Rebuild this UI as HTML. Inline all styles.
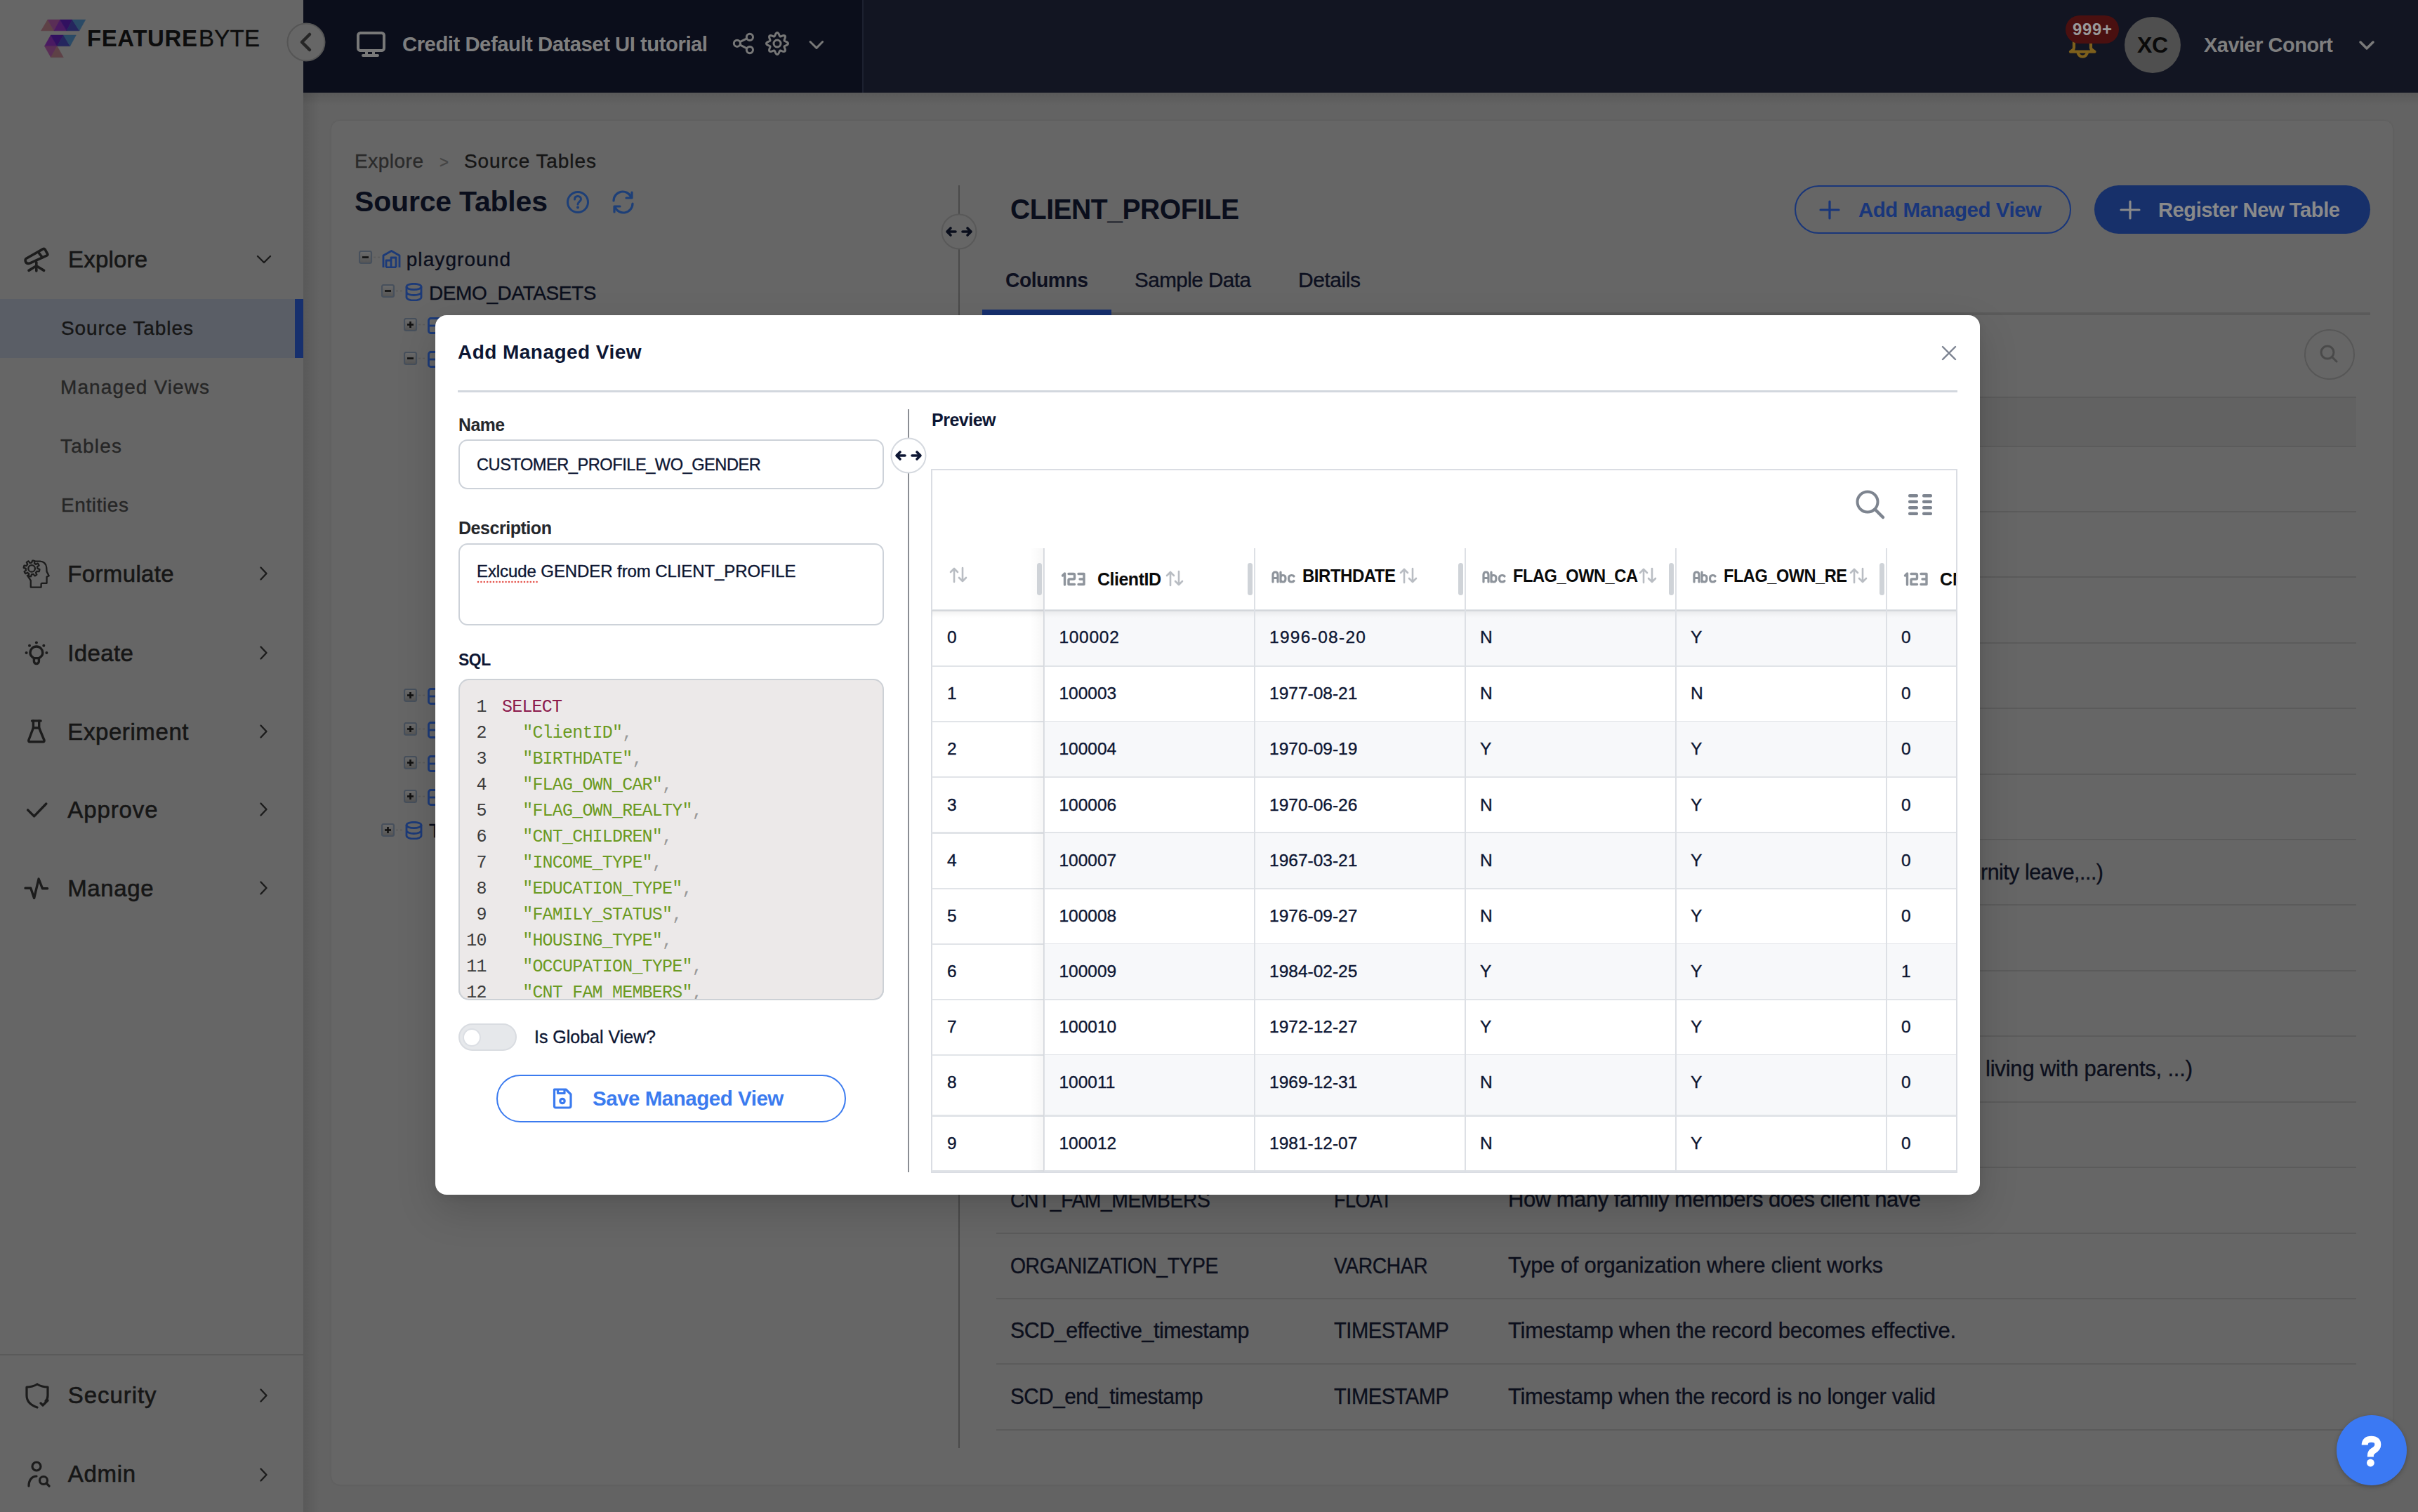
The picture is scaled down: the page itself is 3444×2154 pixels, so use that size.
<!DOCTYPE html>
<html><head><meta charset="utf-8"><title>FeatureByte</title>
<style>
html,body{margin:0;padding:0;}
body{width:3444px;height:2154px;position:relative;overflow:hidden;background:#636363;font-family:'Liberation Sans', sans-serif;}
.tx{position:absolute;white-space:nowrap;line-height:1;}
.sb{-webkit-text-stroke:0.5px currentColor;}
@media (max-width:1800px){html{zoom:0.5;}}
</style></head><body>
<div style="position:absolute;left:472.0px;top:172.0px;width:2936.0px;height:1943.0px;background:#666666;border-radius:12px;box-shadow:0 0 3px rgba(0,0,0,0.10);"></div>
<div style="position:absolute;left:432.0px;top:132.0px;width:3012.0px;height:18.0px;background:linear-gradient(rgba(0,0,0,0.10),rgba(0,0,0,0));"></div>
<div style="position:absolute;left:432.0px;top:132.0px;width:23.0px;height:2022.0px;background:linear-gradient(90deg,rgba(0,0,0,0.10),rgba(0,0,0,0));"></div>
<div style="position:absolute;left:0.0px;top:0.0px;width:432.0px;height:2154.0px;background:#666666;"></div>
<div style="position:absolute;left:432.0px;top:0.0px;width:797.0px;height:132.0px;background:#0b0e1b;"></div>
<div style="position:absolute;left:1229.0px;top:0.0px;width:2215.0px;height:132.0px;background:#121522;"></div>
<div style="position:absolute;left:1228.0px;top:0.0px;width:2.0px;height:132.0px;background:#1c2030;"></div>
<svg style="position:absolute;left:0.0px;top:0.0px;" width="130.0" height="90.0" viewBox="0 0 130 90"><polygon points="58.6,43.8 67.9,28.1 77,43.8" fill="#5e4146" stroke="#5e4146" stroke-width="0.5"/><polygon points="67.9,28.1 85.5,28.1 77,43.8" fill="#5a2e56" stroke="#5a2e56" stroke-width="0.5"/><polygon points="77,43.8 85.5,28.1 95,43.8" fill="#4a1a62" stroke="#4a1a62" stroke-width="0.5"/><polygon points="85.5,28.1 103,28.1 95,43.8" fill="#311060" stroke="#311060" stroke-width="0.5"/><polygon points="95,43.8 103,28.1 113,43.8" fill="#25265e" stroke="#25265e" stroke-width="0.5"/><polygon points="103,28.1 121.8,28.1 113,43.8" fill="#2a4a66" stroke="#2a4a66" stroke-width="0.5"/><polygon points="63.5,65.7 72.3,50 81.3,65.7" fill="#4a1a62" stroke="#4a1a62" stroke-width="0.5"/><polygon points="72.3,50 90.5,50 81.3,65.7" fill="#311060" stroke="#311060" stroke-width="0.5"/><polygon points="81.3,65.7 90.5,50 99.8,65.7" fill="#25265e" stroke="#25265e" stroke-width="0.5"/><polygon points="90.5,50 108.3,50 99.8,65.7" fill="#2a4a66" stroke="#2a4a66" stroke-width="0.5"/><polygon points="63.5,65.7 81.3,65.7 72.5,81.7" fill="#5a2e56" stroke="#5a2e56" stroke-width="0.5"/><polygon points="72.5,81.7 81.3,65.7 90.3,81.7" fill="#5e4146" stroke="#5e4146" stroke-width="0.5"/></svg>
<div id="t1" class="tx" style="left:124.0px;top:38.2px;font-size:33.0px;font-weight:700;color:#0d0d0d;font-family:'Liberation Sans', sans-serif;letter-spacing:0.602px;">FEATURE</div>
<div id="t2" class="tx" style="left:283.0px;top:38.2px;font-size:33.0px;font-weight:400;color:#0d0d0d;font-family:'Liberation Sans', sans-serif;letter-spacing:0.266px;-webkit-text-stroke:0.35px currentColor;">BYTE</div>
<svg style="position:absolute;left:408.0px;top:32.0px;" width="56.0" height="56.0" viewBox="0 0 56 56"><circle cx="28" cy="28" r="26.5" fill="#666" stroke="#555" stroke-width="2"/><path d="M33 17 L22 28 L33 39" fill="none" stroke="#262626" stroke-width="4.5" stroke-linecap="round" stroke-linejoin="round"/></svg>
<svg style="position:absolute;left:506.0px;top:43.0px;" width="44.0" height="40.0" viewBox="0 0 44 40"><rect x="4" y="4" width="37" height="25" rx="3.5" fill="none" stroke="#787878" stroke-width="4"/><path d="M16 29 V36 M26 29 V36 M11 36 H32" stroke="#787878" stroke-width="4" stroke-linecap="round"/></svg>
<div id="t3" class="tx" style="left:573.0px;top:48.0px;font-size:30.0px;font-weight:700;color:#7f7f7f;font-family:'Liberation Sans', sans-serif;letter-spacing:-0.50px;transform:scaleX(0.9770);transform-origin:0 0;">Credit Default Dataset UI tutorial</div>
<svg style="position:absolute;left:1040.0px;top:45.0px;" width="36.0" height="34.0" viewBox="0 0 36 34"><g fill="none" stroke="#777" stroke-width="3"><circle cx="9.9" cy="16.8" r="4.6"/><circle cx="27.9" cy="7.9" r="4.6"/><circle cx="27.9" cy="26.1" r="4.6"/><path d="M14 14.7 L23.8 9.9 M14 18.9 L23.8 24"/></g></svg>
<svg style="position:absolute;left:1090.0px;top:45.0px;" width="34.0" height="34.0" viewBox="0 0 34 34"><polygon points="17.00,1.50 17.80,1.72 18.54,2.34 19.18,3.26 19.69,4.32 20.12,5.36 20.50,6.22 20.92,6.78 21.45,7.00 22.15,6.90 23.02,6.56 24.06,6.13 25.18,5.75 26.28,5.55 27.24,5.63 27.96,6.04 28.37,6.76 28.45,7.72 28.25,8.82 27.87,9.94 27.44,10.97 27.10,11.85 27.00,12.55 27.22,13.08 27.78,13.50 28.64,13.88 29.68,14.31 30.74,14.82 31.66,15.46 32.28,16.20 32.50,17.00 32.28,17.80 31.66,18.54 30.74,19.18 29.68,19.69 28.64,20.12 27.78,20.50 27.22,20.92 27.00,21.45 27.10,22.15 27.44,23.02 27.87,24.06 28.25,25.18 28.45,26.28 28.37,27.24 27.96,27.96 27.24,28.37 26.28,28.45 25.18,28.25 24.06,27.87 23.02,27.44 22.15,27.10 21.45,27.00 20.92,27.22 20.50,27.78 20.12,28.64 19.69,29.68 19.18,30.74 18.54,31.66 17.80,32.28 17.00,32.50 16.20,32.28 15.46,31.66 14.82,30.74 14.31,29.68 13.88,28.64 13.50,27.78 13.08,27.22 12.55,27.00 11.85,27.10 10.98,27.44 9.94,27.87 8.82,28.25 7.72,28.45 6.76,28.37 6.04,27.96 5.63,27.24 5.55,26.28 5.75,25.18 6.13,24.06 6.56,23.03 6.90,22.15 7.00,21.45 6.78,20.92 6.22,20.50 5.36,20.12 4.32,19.69 3.26,19.18 2.34,18.54 1.72,17.80 1.50,17.00 1.72,16.20 2.34,15.46 3.26,14.82 4.32,14.31 5.36,13.88 6.22,13.50 6.78,13.08 7.00,12.55 6.90,11.85 6.56,10.97 6.13,9.94 5.75,8.82 5.55,7.72 5.63,6.76 6.04,6.04 6.76,5.63 7.72,5.55 8.82,5.75 9.94,6.13 10.98,6.56 11.85,6.90 12.55,7.00 13.08,6.78 13.50,6.22 13.88,5.36 14.31,4.32 14.82,3.26 15.46,2.34 16.20,1.72" fill="none" stroke="#777" stroke-width="3" stroke-linejoin="round"/><circle cx="17" cy="17" r="5" fill="none" stroke="#777" stroke-width="3"/></svg>
<svg style="position:absolute;left:1151.0px;top:56.0px;" width="24.0" height="16.0" viewBox="0 0 24 16"><path d="M3 3.5 L12 12.4 L20.6 3.5" fill="none" stroke="#777" stroke-width="3" stroke-linecap="round" stroke-linejoin="round"/></svg>
<svg style="position:absolute;left:2940.0px;top:40.0px;" width="52.0" height="50.0" viewBox="0 0 52 50"><path d="M14 8 V28 Q14 30 12 31.5 L9 33.7 H43.5 L40.5 31.5 Q38 30 38 28 V8" fill="none" stroke="#7d5f1c" stroke-width="4.2" stroke-linejoin="round" stroke-linecap="round"/><path d="M19.5 34 A6.5 6.5 0 0 0 33 34" fill="none" stroke="#7d5f1c" stroke-width="4.2"/></svg>
<div style="position:absolute;left:2942.0px;top:22.0px;width:76.0px;height:40.0px;background:#4a1010;border-radius:20px;"></div>
<div id="t4" class="tx" style="left:2952.0px;top:30.1px;font-size:24.0px;font-weight:700;color:#9a9a9a;font-family:'Liberation Sans', sans-serif;letter-spacing:0.646px;">999+</div>
<div style="position:absolute;left:3026.0px;top:24.0px;width:80.0px;height:80.0px;background:#4f4f4f;border-radius:50%;"></div>
<div id="t5" class="tx" style="left:3044.0px;top:47.8px;font-size:32.0px;font-weight:700;color:#0a0a0a;font-family:'Liberation Sans', sans-serif;letter-spacing:-0.453px;">XC</div>
<div id="t6" class="tx" style="left:3139.0px;top:48.5px;font-size:30.0px;font-weight:700;color:#7f7f7f;font-family:'Liberation Sans', sans-serif;letter-spacing:-0.50px;transform:scaleX(0.9648);transform-origin:0 0;">Xavier Conort</div>
<svg style="position:absolute;left:3359.0px;top:56.0px;" width="24.0" height="16.0" viewBox="0 0 24 16"><path d="M3 4 L12 13 L21 4" fill="none" stroke="#7a7a7a" stroke-width="3.5" stroke-linecap="round" stroke-linejoin="round"/></svg>
<svg style="position:absolute;left:33.0px;top:352.0px;" width="38.0" height="38.0" viewBox="0 0 38 38"><g fill="none" stroke="#1c1c1c" stroke-width="3.6" stroke-linecap="round" stroke-linejoin="round"><path d="M4 16.5 L28.4 2.6 Q30 1.8 31 3.2 L34.6 9.6 Q35.4 11 34 11.8 L10.5 22.6 Q5.5 24.8 3.6 21.2 Q2.4 18.2 4 16.5 Z"/><path d="M22.6 8.6 L27.3 14.6"/><path d="M18.8 21.5 V34 M8 33.4 L18.8 26.8 L29.6 33.4"/></g></svg>
<div id="t7" class="tx" style="left:97.0px;top:352.9px;font-size:33.0px;font-weight:400;color:#161616;font-family:'Liberation Sans', sans-serif;letter-spacing:0.185px;-webkit-text-stroke:0.6px #161616;">Explore</div>
<svg style="position:absolute;left:364.0px;top:362.0px;" width="24.0" height="16.0" viewBox="0 0 24 16"><path d="M3 3 L12 12 L21 3" fill="none" stroke="#1c1c1c" stroke-width="2.4" stroke-linecap="round" stroke-linejoin="round"/></svg>
<div style="position:absolute;left:0.0px;top:426.0px;width:432.0px;height:84.0px;background:#5a5e66;"></div>
<div style="position:absolute;left:420.0px;top:426.0px;width:12.0px;height:84.0px;background:#17306e;"></div>
<div id="t8" class="tx" style="left:87.0px;top:454.2px;font-size:28.0px;font-weight:400;color:#161616;font-family:'Liberation Sans', sans-serif;letter-spacing:0.922px;-webkit-text-stroke:0.4px currentColor;">Source Tables</div>
<div id="t9" class="tx" style="left:86.0px;top:538.2px;font-size:28.0px;font-weight:400;color:#262626;font-family:'Liberation Sans', sans-serif;letter-spacing:1.105px;-webkit-text-stroke:0.4px currentColor;">Managed Views</div>
<div id="t10" class="tx" style="left:86.0px;top:622.2px;font-size:28.0px;font-weight:400;color:#262626;font-family:'Liberation Sans', sans-serif;letter-spacing:1.212px;-webkit-text-stroke:0.4px currentColor;">Tables</div>
<div id="t11" class="tx" style="left:87.0px;top:706.2px;font-size:28.0px;font-weight:400;color:#262626;font-family:'Liberation Sans', sans-serif;letter-spacing:0.596px;-webkit-text-stroke:0.4px currentColor;">Entities</div>
<svg style="position:absolute;left:32.0px;top:796.0px;" width="40.0" height="46.0" viewBox="0 0 40 46"><g fill="none" stroke="#1c1c1c" stroke-width="2.3" stroke-linejoin="round"><polygon points="24.29,16.08 24.02,17.16 23.65,18.22 20.44,17.78 20.02,18.48 19.54,19.14 18.99,19.74 20.37,22.68 19.47,23.35 18.52,23.93 17.51,24.41 15.54,21.83 14.75,22.03 13.95,22.16 13.14,22.20 12.03,25.25 10.92,25.09 9.84,24.82 8.78,24.45 9.22,21.24 8.52,20.82 7.86,20.34 7.26,19.79 4.32,21.17 3.65,20.27 3.07,19.32 2.59,18.31 5.17,16.34 4.97,15.55 4.84,14.75 4.80,13.94 1.75,12.83 1.91,11.72 2.18,10.64 2.55,9.58 5.76,10.02 6.18,9.32 6.66,8.66 7.21,8.06 5.83,5.12 6.73,4.45 7.68,3.87 8.69,3.39 10.66,5.97 11.45,5.77 12.25,5.64 13.06,5.60 14.17,2.55 15.28,2.71 16.36,2.98 17.42,3.35 16.98,6.56 17.68,6.98 18.34,7.46 18.94,8.01 21.88,6.63 22.55,7.53 23.13,8.48 23.61,9.49 21.03,11.46 21.23,12.25 21.36,13.05 21.40,13.86 24.45,14.97"/><circle cx="13.1" cy="13.9" r="4.8"/><path d="M16.6 3.6 H25 C30 3.6 34 7.5 34.2 12.5 L34.6 18.4 L37.7 24.2 L34.6 25.8 V34.8 H27.7 L26.6 35.9 V40.6 H11.8 V31 L6.5 23"/></g></svg>
<div id="t12" class="tx" style="left:96.3px;top:801.0px;font-size:33.0px;font-weight:400;color:#161616;font-family:'Liberation Sans', sans-serif;letter-spacing:0.355px;-webkit-text-stroke:0.6px #161616;">Formulate</div>
<svg style="position:absolute;left:367.0px;top:805.0px;" width="16.0" height="24.0" viewBox="0 0 16 24"><path d="M4.5 3.5 L12.5 12 L4.5 20.5" fill="none" stroke="#1c1c1c" stroke-width="2.4" stroke-linecap="round" stroke-linejoin="round"/></svg>
<svg style="position:absolute;left:30.0px;top:905.0px;" width="45.0" height="47.0" viewBox="0 0 45 47"><g fill="none" stroke="#1c1c1c" stroke-width="3.4" stroke-linecap="round" stroke-linejoin="round"><path d="M18.4 32.6 C14 30 13 26.5 13 24.9 A8.9 8.9 0 0 1 30.8 24.9 C30.8 26.5 29.8 30 25.4 32.6 Z"/><path d="M18.4 33 V37 A3.5 3.5 0 0 0 25.4 37 V33"/></g><g fill="#1c1c1c"><circle cx="21.9" cy="10.6" r="2"/><circle cx="12" cy="14.8" r="2"/><circle cx="32.3" cy="14.8" r="2"/><circle cx="7.6" cy="24.9" r="2"/><circle cx="36.4" cy="24.9" r="2"/></g></svg>
<div id="t13" class="tx" style="left:96.3px;top:913.7px;font-size:33.0px;font-weight:400;color:#161616;font-family:'Liberation Sans', sans-serif;letter-spacing:0.350px;-webkit-text-stroke:0.6px #161616;">Ideate</div>
<svg style="position:absolute;left:367.0px;top:917.5px;" width="16.0" height="24.0" viewBox="0 0 16 24"><path d="M4.5 3.5 L12.5 12 L4.5 20.5" fill="none" stroke="#1c1c1c" stroke-width="2.4" stroke-linecap="round" stroke-linejoin="round"/></svg>
<svg style="position:absolute;left:35.0px;top:1020.0px;" width="35.0" height="42.0" viewBox="0 0 35 42"><g fill="none" stroke="#1c1c1c" stroke-width="3.4" stroke-linecap="round" stroke-linejoin="round"><path d="M10.6 6.9 H23.1"/><path d="M12.4 7 V17 L5.8 34.5 Q5.3 36.7 7.5 36.7 H26.3 Q28.5 36.7 28 34.5 L20.7 17 V7"/><path d="M12.4 17 H20.7"/></g></svg>
<div id="t14" class="tx" style="left:96.3px;top:1025.7px;font-size:33.0px;font-weight:400;color:#161616;font-family:'Liberation Sans', sans-serif;letter-spacing:0.588px;-webkit-text-stroke:0.6px #161616;">Experiment</div>
<svg style="position:absolute;left:367.0px;top:1029.5px;" width="16.0" height="24.0" viewBox="0 0 16 24"><path d="M4.5 3.5 L12.5 12 L4.5 20.5" fill="none" stroke="#1c1c1c" stroke-width="2.4" stroke-linecap="round" stroke-linejoin="round"/></svg>
<svg style="position:absolute;left:34.0px;top:1140.0px;" width="38.0" height="30.0" viewBox="0 0 38 30"><path d="M5.6 13.9 L14.6 22.9 L31.8 5" fill="none" stroke="#1c1c1c" stroke-width="3.4" stroke-linecap="round" stroke-linejoin="round"/></svg>
<div id="t15" class="tx" style="left:96.3px;top:1136.8px;font-size:33.0px;font-weight:400;color:#161616;font-family:'Liberation Sans', sans-serif;letter-spacing:0.880px;-webkit-text-stroke:0.6px #161616;">Approve</div>
<svg style="position:absolute;left:367.0px;top:1140.5px;" width="16.0" height="24.0" viewBox="0 0 16 24"><path d="M4.5 3.5 L12.5 12 L4.5 20.5" fill="none" stroke="#1c1c1c" stroke-width="2.4" stroke-linecap="round" stroke-linejoin="round"/></svg>
<svg style="position:absolute;left:32.0px;top:1248.0px;" width="40.0" height="36.0" viewBox="0 0 40 36"><path d="M4 17.2 H11.8 L16.6 31.5 L23.1 4.1 L28.5 17.8 H35.6" fill="none" stroke="#1c1c1c" stroke-width="3.4" stroke-linecap="round" stroke-linejoin="round"/></svg>
<div id="t16" class="tx" style="left:96.3px;top:1249.2px;font-size:33.0px;font-weight:400;color:#161616;font-family:'Liberation Sans', sans-serif;letter-spacing:0.587px;-webkit-text-stroke:0.6px #161616;">Manage</div>
<svg style="position:absolute;left:367.0px;top:1253.0px;" width="16.0" height="24.0" viewBox="0 0 16 24"><path d="M4.5 3.5 L12.5 12 L4.5 20.5" fill="none" stroke="#1c1c1c" stroke-width="2.4" stroke-linecap="round" stroke-linejoin="round"/></svg>
<div style="position:absolute;left:0.0px;top:1929.0px;width:432.0px;height:2.0px;background:#5a5a5a;"></div>
<svg style="position:absolute;left:34.0px;top:1969.0px;" width="38.0" height="38.0" viewBox="0 0 38 38"><path d="M19 3 C14 6 9 7 4 7 V19 C4 28 10 33 19 36 M19 3 C24 6 29 7 34 7 V19 C34 22 33 25 31 27 M24 30 L27 33 L34 26" fill="none" stroke="#1c1c1c" stroke-width="3.2" stroke-linecap="round" stroke-linejoin="round"/></svg>
<div id="t17" class="tx" style="left:96.8px;top:1970.7px;font-size:33.0px;font-weight:400;color:#161616;font-family:'Liberation Sans', sans-serif;letter-spacing:0.940px;-webkit-text-stroke:0.6px #161616;">Security</div>
<svg style="position:absolute;left:367.0px;top:1976.0px;" width="16.0" height="24.0" viewBox="0 0 16 24"><path d="M4.5 3.5 L12.5 12 L4.5 20.5" fill="none" stroke="#1c1c1c" stroke-width="2.4" stroke-linecap="round" stroke-linejoin="round"/></svg>
<svg style="position:absolute;left:38.0px;top:2081.0px;" width="34.0" height="39.0" viewBox="0 0 34 39"><g fill="none" stroke="#1c1c1c" stroke-width="3.2" stroke-linecap="round"><circle cx="14" cy="8" r="6"/><path d="M3 36 C3 27 8 22 14 22"/><circle cx="24" cy="28" r="5.5"/><path d="M28 32 L32 36"/></g></svg>
<div id="t18" class="tx" style="left:96.8px;top:2082.8px;font-size:33.0px;font-weight:400;color:#161616;font-family:'Liberation Sans', sans-serif;letter-spacing:0.663px;-webkit-text-stroke:0.6px #161616;">Admin</div>
<svg style="position:absolute;left:367.0px;top:2089.0px;" width="16.0" height="24.0" viewBox="0 0 16 24"><path d="M4.5 3.5 L12.5 12 L4.5 20.5" fill="none" stroke="#1c1c1c" stroke-width="2.4" stroke-linecap="round" stroke-linejoin="round"/></svg>
<div id="t19" class="tx" style="left:505.0px;top:216.2px;font-size:28.0px;font-weight:400;color:#2a2a2a;font-family:'Liberation Sans', sans-serif;letter-spacing:0.510px;-webkit-text-stroke:0.35px currentColor;">Explore</div>
<div id="t20" class="tx" style="left:625.7px;top:218.6px;font-size:24.0px;font-weight:400;color:#444;font-family:'Liberation Sans', sans-serif;letter-spacing:-0.50px;transform:scaleX(0.9275);transform-origin:0 0;-webkit-text-stroke:0.35px currentColor;">&gt;</div>
<div id="t21" class="tx" style="left:661.0px;top:216.2px;font-size:28.0px;font-weight:400;color:#151515;font-family:'Liberation Sans', sans-serif;letter-spacing:0.922px;-webkit-text-stroke:0.35px currentColor;">Source Tables</div>
<div id="t22" class="tx" style="left:505.0px;top:267.1px;font-size:41.0px;font-weight:700;color:#0a0e1c;font-family:'Liberation Sans', sans-serif;letter-spacing:-0.186px;">Source Tables</div>
<svg style="position:absolute;left:806.0px;top:271.0px;" width="34.0" height="34.0" viewBox="0 0 34 34"><circle cx="17" cy="17" r="14.5" fill="none" stroke="#1d3f78" stroke-width="3"/><path d="M12.5 13 C12.5 10 14.5 8.5 17 8.5 C19.5 8.5 21.5 10.2 21.5 12.8 C21.5 16 17 16.3 17 20" fill="none" stroke="#1d3f78" stroke-width="3" stroke-linecap="round"/><circle cx="17" cy="24.5" r="2" fill="#1d3f78"/></svg>
<svg style="position:absolute;left:870.0px;top:271.0px;" width="36.0" height="34.0" viewBox="0 0 36 34"><g fill="none" stroke="#1d3f78" stroke-width="3.2" stroke-linecap="round" stroke-linejoin="round"><path d="M4 15 A13 13 0 0 1 29 10 M31 19 A13 13 0 0 1 6 24"/><path d="M30 3 V11 H22 M5 31 V23 H13"/></g></svg>
<svg style="position:absolute;left:511.0px;top:357.0px;" width="32.0" height="20.0" viewBox="0 0 32 20"><defs><linearGradient id="gb" x1="0" y1="0" x2="0" y2="1"><stop offset="0" stop-color="#6c6c6c"/><stop offset="1" stop-color="#545454"/></linearGradient></defs><rect x="1" y="1" width="17" height="17" rx="2.5" fill="url(#gb)" stroke="#47505c" stroke-width="2.2"/><path d="M5 9.5 H14" stroke="#111" stroke-width="2.6"/><path d="M21 9.5 H24 M27 9.5 H30" stroke="#5a5a5a" stroke-width="1.5"/></svg>
<svg style="position:absolute;left:544.0px;top:356.0px;" width="27.0" height="26.0" viewBox="0 0 27 26"><g fill="none" stroke="#1c3a78" stroke-width="2.8" stroke-linejoin="round"><path d="M2 25 V8 L13.5 1.5 L25 8 V25"/><path d="M6 25 V15 H13 V25 M13 25 V11 H20 V25 M6 25 H20"/></g></svg>
<div id="t23" class="tx" style="left:578.7px;top:356.2px;font-size:28.0px;font-weight:400;color:#0a0e1c;font-family:'Liberation Sans', sans-serif;letter-spacing:1.082px;-webkit-text-stroke:0.35px currentColor;">playground</div>
<svg style="position:absolute;left:543.0px;top:405.0px;" width="32.0" height="20.0" viewBox="0 0 32 20"><defs><linearGradient id="gb" x1="0" y1="0" x2="0" y2="1"><stop offset="0" stop-color="#6c6c6c"/><stop offset="1" stop-color="#545454"/></linearGradient></defs><rect x="1" y="1" width="17" height="17" rx="2.5" fill="url(#gb)" stroke="#47505c" stroke-width="2.2"/><path d="M5 9.5 H14" stroke="#111" stroke-width="2.6"/><path d="M21 9.5 H24 M27 9.5 H30" stroke="#5a5a5a" stroke-width="1.5"/></svg>
<svg style="position:absolute;left:577.0px;top:403.0px;" width="25.0" height="26.0" viewBox="0 0 25 26"><g fill="none" stroke="#1c3a78" stroke-width="2.8"><ellipse cx="12.5" cy="5.5" rx="10.5" ry="4.2"/><path d="M2 5.5 V20.5 C2 23 7 25 12.5 25 C18 25 23 23 23 20.5 V5.5 M2 13 C2 15.5 7 17.5 12.5 17.5 C18 17.5 23 15.5 23 13"/></g></svg>
<div id="t24" class="tx" style="left:611.0px;top:403.7px;font-size:28.0px;font-weight:400;color:#0a0e1c;font-family:'Liberation Sans', sans-serif;letter-spacing:-0.395px;-webkit-text-stroke:0.35px currentColor;">DEMO_DATASETS</div>
<svg style="position:absolute;left:575.0px;top:453.0px;" width="32.0" height="20.0" viewBox="0 0 32 20"><defs><linearGradient id="gb" x1="0" y1="0" x2="0" y2="1"><stop offset="0" stop-color="#6c6c6c"/><stop offset="1" stop-color="#545454"/></linearGradient></defs><rect x="1" y="1" width="17" height="17" rx="2.5" fill="url(#gb)" stroke="#47505c" stroke-width="2.2"/><path d="M5 9.5 H14" stroke="#111" stroke-width="2.6"/><path d="M9.5 5 V14" stroke="#111" stroke-width="2.6"/><path d="M21 9.5 H24 M27 9.5 H30" stroke="#5a5a5a" stroke-width="1.5"/></svg>
<svg style="position:absolute;left:609.0px;top:452.0px;" width="26.0" height="24.0" viewBox="0 0 26 24"><g fill="none" stroke="#1c3a78" stroke-width="2.8"><rect x="1.5" y="1.5" width="23" height="21" rx="3"/><path d="M1.5 12 H24.5"/></g></svg>
<svg style="position:absolute;left:575.0px;top:501.0px;" width="32.0" height="20.0" viewBox="0 0 32 20"><defs><linearGradient id="gb" x1="0" y1="0" x2="0" y2="1"><stop offset="0" stop-color="#6c6c6c"/><stop offset="1" stop-color="#545454"/></linearGradient></defs><rect x="1" y="1" width="17" height="17" rx="2.5" fill="url(#gb)" stroke="#47505c" stroke-width="2.2"/><path d="M5 9.5 H14" stroke="#111" stroke-width="2.6"/><path d="M21 9.5 H24 M27 9.5 H30" stroke="#5a5a5a" stroke-width="1.5"/></svg>
<svg style="position:absolute;left:609.0px;top:500.0px;" width="26.0" height="24.0" viewBox="0 0 26 24"><g fill="none" stroke="#1c3a78" stroke-width="2.8"><rect x="1.5" y="1.5" width="23" height="21" rx="3"/><path d="M1.5 12 H24.5"/></g></svg>
<svg style="position:absolute;left:575.0px;top:981.0px;" width="32.0" height="20.0" viewBox="0 0 32 20"><defs><linearGradient id="gb" x1="0" y1="0" x2="0" y2="1"><stop offset="0" stop-color="#6c6c6c"/><stop offset="1" stop-color="#545454"/></linearGradient></defs><rect x="1" y="1" width="17" height="17" rx="2.5" fill="url(#gb)" stroke="#47505c" stroke-width="2.2"/><path d="M5 9.5 H14" stroke="#111" stroke-width="2.6"/><path d="M9.5 5 V14" stroke="#111" stroke-width="2.6"/><path d="M21 9.5 H24 M27 9.5 H30" stroke="#5a5a5a" stroke-width="1.5"/></svg>
<svg style="position:absolute;left:609.0px;top:979.5px;" width="26.0" height="24.0" viewBox="0 0 26 24"><g fill="none" stroke="#1c3a78" stroke-width="2.8"><rect x="1.5" y="1.5" width="23" height="21" rx="3"/><path d="M1.5 12 H24.5"/></g></svg>
<svg style="position:absolute;left:575.0px;top:1029.0px;" width="32.0" height="20.0" viewBox="0 0 32 20"><defs><linearGradient id="gb" x1="0" y1="0" x2="0" y2="1"><stop offset="0" stop-color="#6c6c6c"/><stop offset="1" stop-color="#545454"/></linearGradient></defs><rect x="1" y="1" width="17" height="17" rx="2.5" fill="url(#gb)" stroke="#47505c" stroke-width="2.2"/><path d="M5 9.5 H14" stroke="#111" stroke-width="2.6"/><path d="M9.5 5 V14" stroke="#111" stroke-width="2.6"/><path d="M21 9.5 H24 M27 9.5 H30" stroke="#5a5a5a" stroke-width="1.5"/></svg>
<svg style="position:absolute;left:609.0px;top:1027.5px;" width="26.0" height="24.0" viewBox="0 0 26 24"><g fill="none" stroke="#1c3a78" stroke-width="2.8"><rect x="1.5" y="1.5" width="23" height="21" rx="3"/><path d="M1.5 12 H24.5"/></g></svg>
<svg style="position:absolute;left:575.0px;top:1077.0px;" width="32.0" height="20.0" viewBox="0 0 32 20"><defs><linearGradient id="gb" x1="0" y1="0" x2="0" y2="1"><stop offset="0" stop-color="#6c6c6c"/><stop offset="1" stop-color="#545454"/></linearGradient></defs><rect x="1" y="1" width="17" height="17" rx="2.5" fill="url(#gb)" stroke="#47505c" stroke-width="2.2"/><path d="M5 9.5 H14" stroke="#111" stroke-width="2.6"/><path d="M9.5 5 V14" stroke="#111" stroke-width="2.6"/><path d="M21 9.5 H24 M27 9.5 H30" stroke="#5a5a5a" stroke-width="1.5"/></svg>
<svg style="position:absolute;left:609.0px;top:1075.5px;" width="26.0" height="24.0" viewBox="0 0 26 24"><g fill="none" stroke="#1c3a78" stroke-width="2.8"><rect x="1.5" y="1.5" width="23" height="21" rx="3"/><path d="M1.5 12 H24.5"/></g></svg>
<svg style="position:absolute;left:575.0px;top:1125.0px;" width="32.0" height="20.0" viewBox="0 0 32 20"><defs><linearGradient id="gb" x1="0" y1="0" x2="0" y2="1"><stop offset="0" stop-color="#6c6c6c"/><stop offset="1" stop-color="#545454"/></linearGradient></defs><rect x="1" y="1" width="17" height="17" rx="2.5" fill="url(#gb)" stroke="#47505c" stroke-width="2.2"/><path d="M5 9.5 H14" stroke="#111" stroke-width="2.6"/><path d="M9.5 5 V14" stroke="#111" stroke-width="2.6"/><path d="M21 9.5 H24 M27 9.5 H30" stroke="#5a5a5a" stroke-width="1.5"/></svg>
<svg style="position:absolute;left:609.0px;top:1123.5px;" width="26.0" height="24.0" viewBox="0 0 26 24"><g fill="none" stroke="#1c3a78" stroke-width="2.8"><rect x="1.5" y="1.5" width="23" height="21" rx="3"/><path d="M1.5 12 H24.5"/></g></svg>
<svg style="position:absolute;left:543.0px;top:1173.0px;" width="32.0" height="20.0" viewBox="0 0 32 20"><defs><linearGradient id="gb" x1="0" y1="0" x2="0" y2="1"><stop offset="0" stop-color="#6c6c6c"/><stop offset="1" stop-color="#545454"/></linearGradient></defs><rect x="1" y="1" width="17" height="17" rx="2.5" fill="url(#gb)" stroke="#47505c" stroke-width="2.2"/><path d="M5 9.5 H14" stroke="#111" stroke-width="2.6"/><path d="M9.5 5 V14" stroke="#111" stroke-width="2.6"/><path d="M21 9.5 H24 M27 9.5 H30" stroke="#5a5a5a" stroke-width="1.5"/></svg>
<svg style="position:absolute;left:577.0px;top:1170.0px;" width="25.0" height="26.0" viewBox="0 0 25 26"><g fill="none" stroke="#1c3a78" stroke-width="2.8"><ellipse cx="12.5" cy="5.5" rx="10.5" ry="4.2"/><path d="M2 5.5 V20.5 C2 23 7 25 12.5 25 C18 25 23 23 23 20.5 V5.5 M2 13 C2 15.5 7 17.5 12.5 17.5 C18 17.5 23 15.5 23 13"/></g></svg>
<div id="t25" class="tx" style="left:611.0px;top:1170.2px;font-size:28.0px;font-weight:400;color:#0a0e1c;font-family:'Liberation Sans', sans-serif;-webkit-text-stroke:0.35px currentColor;">TPCH</div>
<div style="position:absolute;left:1365.0px;top:264.0px;width:2.0px;height:1799.0px;background:#4a4a4a;"></div>
<svg style="position:absolute;left:1340.0px;top:304.0px;" width="52.0" height="52.0" viewBox="0 0 52 52"><circle cx="26" cy="26" r="24.5" fill="#666" stroke="#595959" stroke-width="2"/><g fill="none" stroke="#0a0e1c" stroke-width="3.6" stroke-linecap="round" stroke-linejoin="round"><path d="M9 26 H21 M14 21 L9 26 L14 31 M31 26 H43 M38 21 L43 26 L38 31"/></g></svg>
<div id="t26" class="tx" style="left:1439.0px;top:278.1px;font-size:41.0px;font-weight:700;color:#0a0e1c;font-family:'Liberation Sans', sans-serif;letter-spacing:-0.50px;transform:scaleX(0.9531);transform-origin:0 0;">CLIENT_PROFILE</div>
<div style="position:absolute;left:2556.0px;top:264.0px;width:394.0px;height:69.0px;border:2.5px solid #19367a;border-radius:35px;box-sizing:border-box;"></div>
<svg style="position:absolute;left:2590.0px;top:285.0px;" width="32.0" height="28.0" viewBox="0 0 32 28"><path d="M16 2 V26 M3 14 H29" stroke="#19367a" stroke-width="3.2" stroke-linecap="round"/></svg>
<div id="t27" class="tx" style="left:2647.0px;top:283.5px;font-size:30.0px;font-weight:700;color:#19367a;font-family:'Liberation Sans', sans-serif;letter-spacing:-0.50px;transform:scaleX(0.9837);transform-origin:0 0;">Add Managed View</div>
<div style="position:absolute;left:2983.0px;top:264.0px;width:393.0px;height:69.0px;background:#17306a;border-radius:35px;"></div>
<svg style="position:absolute;left:3018.0px;top:285.0px;" width="32.0" height="28.0" viewBox="0 0 32 28"><path d="M16 2 V26 M3 14 H29" stroke="#8a8a8a" stroke-width="3.2" stroke-linecap="round"/></svg>
<div id="t28" class="tx" style="left:3074.0px;top:283.5px;font-size:30.0px;font-weight:700;color:#8a8a8a;font-family:'Liberation Sans', sans-serif;letter-spacing:-0.50px;transform:scaleX(0.9736);transform-origin:0 0;">Register New Table</div>
<div id="t29" class="tx" style="left:1432.0px;top:383.5px;font-size:30.0px;font-weight:700;color:#0d1020;font-family:'Liberation Sans', sans-serif;letter-spacing:-0.50px;transform:scaleX(0.9414);transform-origin:0 0;">Columns</div>
<div id="t30" class="tx" style="left:1616.0px;top:383.5px;font-size:30.0px;font-weight:400;color:#0d1020;font-family:'Liberation Sans', sans-serif;letter-spacing:-0.50px;transform:scaleX(0.9855);transform-origin:0 0;-webkit-text-stroke:0.35px currentColor;">Sample Data</div>
<div id="t31" class="tx" style="left:1849.0px;top:383.5px;font-size:30.0px;font-weight:400;color:#0d1020;font-family:'Liberation Sans', sans-serif;letter-spacing:-0.451px;-webkit-text-stroke:0.35px currentColor;">Details</div>
<div style="position:absolute;left:1419.0px;top:445.0px;width:1957.0px;height:4.0px;background:#5a5a5a;"></div>
<div style="position:absolute;left:1399.0px;top:441.0px;width:184.0px;height:8.0px;background:#17306e;"></div>
<svg style="position:absolute;left:3280.0px;top:469.0px;" width="76.0" height="72.0" viewBox="0 0 76 72"><circle cx="38" cy="36" r="35" fill="none" stroke="#575757" stroke-width="2"/><circle cx="35" cy="33" r="9" fill="none" stroke="#4a4a4a" stroke-width="3"/><path d="M42 40 L48 46" stroke="#4a4a4a" stroke-width="3" stroke-linecap="round"/></svg>
<div style="position:absolute;left:1419.0px;top:565.0px;width:1937.0px;height:70.0px;background:#626262;"></div>
<div style="position:absolute;left:1419.0px;top:564.6px;width:1937.0px;height:2.0px;background:#5b5b5b;"></div>
<div style="position:absolute;left:1419.0px;top:634.5px;width:1937.0px;height:2.0px;background:#5b5b5b;"></div>
<div style="position:absolute;left:1419.0px;top:727.9px;width:1937.0px;height:2.0px;background:#5b5b5b;"></div>
<div style="position:absolute;left:1419.0px;top:821.3px;width:1937.0px;height:2.0px;background:#5b5b5b;"></div>
<div style="position:absolute;left:1419.0px;top:914.8px;width:1937.0px;height:2.0px;background:#5b5b5b;"></div>
<div style="position:absolute;left:1419.0px;top:1008.2px;width:1937.0px;height:2.0px;background:#5b5b5b;"></div>
<div style="position:absolute;left:1419.0px;top:1101.6px;width:1937.0px;height:2.0px;background:#5b5b5b;"></div>
<div style="position:absolute;left:1419.0px;top:1195.0px;width:1937.0px;height:2.0px;background:#5b5b5b;"></div>
<div style="position:absolute;left:1419.0px;top:1288.4px;width:1937.0px;height:2.0px;background:#5b5b5b;"></div>
<div style="position:absolute;left:1419.0px;top:1381.9px;width:1937.0px;height:2.0px;background:#5b5b5b;"></div>
<div style="position:absolute;left:1419.0px;top:1475.3px;width:1937.0px;height:2.0px;background:#5b5b5b;"></div>
<div style="position:absolute;left:1419.0px;top:1568.7px;width:1937.0px;height:2.0px;background:#5b5b5b;"></div>
<div style="position:absolute;left:1419.0px;top:1662.1px;width:1937.0px;height:2.0px;background:#5b5b5b;"></div>
<div style="position:absolute;left:1419.0px;top:1755.5px;width:1937.0px;height:2.0px;background:#5b5b5b;"></div>
<div style="position:absolute;left:1419.0px;top:1849.0px;width:1937.0px;height:2.0px;background:#5b5b5b;"></div>
<div style="position:absolute;left:1419.0px;top:1942.4px;width:1937.0px;height:2.0px;background:#5b5b5b;"></div>
<div style="position:absolute;left:1419.0px;top:2035.8px;width:1937.0px;height:2.0px;background:#5b5b5b;"></div>
<div id="t32" class="tx" style="left:2821.0px;top:1226.7px;font-size:31.0px;font-weight:400;color:#0c0f1c;font-family:'Liberation Sans', sans-serif;letter-spacing:-0.50px;transform:scaleX(0.9800);transform-origin:0 0;-webkit-text-stroke:0.35px currentColor;">rnity leave,...)</div>
<div id="t33" class="tx" style="left:2828.0px;top:1507.2px;font-size:31.0px;font-weight:400;color:#0c0f1c;font-family:'Liberation Sans', sans-serif;letter-spacing:-0.200px;-webkit-text-stroke:0.35px currentColor;">living with parents, ...)</div>
<div id="t34" class="tx" style="left:1439.0px;top:1694.2px;font-size:31.0px;font-weight:400;color:#0c0f1c;font-family:'Liberation Sans', sans-serif;letter-spacing:-0.50px;transform:scaleX(0.9138);transform-origin:0 0;-webkit-text-stroke:0.35px currentColor;">CNT_FAM_MEMBERS</div>
<div id="t35" class="tx" style="left:1900.4px;top:1694.2px;font-size:31.0px;font-weight:400;color:#0c0f1c;font-family:'Liberation Sans', sans-serif;letter-spacing:-0.50px;transform:scaleX(0.8681);transform-origin:0 0;-webkit-text-stroke:0.35px currentColor;">FLOAT</div>
<div id="t36" class="tx" style="left:2148.0px;top:1693.4px;font-size:31.0px;font-weight:400;color:#0c0f1c;font-family:'Liberation Sans', sans-serif;letter-spacing:-0.50px;transform:scaleX(1.0018);transform-origin:0 0;-webkit-text-stroke:0.35px currentColor;">How many family members does client have</div>
<div id="t37" class="tx" style="left:1439.0px;top:1787.6px;font-size:31.0px;font-weight:400;color:#0c0f1c;font-family:'Liberation Sans', sans-serif;letter-spacing:-0.50px;transform:scaleX(0.9152);transform-origin:0 0;-webkit-text-stroke:0.35px currentColor;">ORGANIZATION_TYPE</div>
<div id="t38" class="tx" style="left:1900.4px;top:1787.6px;font-size:31.0px;font-weight:400;color:#0c0f1c;font-family:'Liberation Sans', sans-serif;letter-spacing:-0.50px;transform:scaleX(0.9133);transform-origin:0 0;-webkit-text-stroke:0.35px currentColor;">VARCHAR</div>
<div id="t39" class="tx" style="left:2148.0px;top:1787.2px;font-size:31.0px;font-weight:400;color:#0c0f1c;font-family:'Liberation Sans', sans-serif;letter-spacing:-0.231px;-webkit-text-stroke:0.35px currentColor;">Type of organization where client works</div>
<div id="t40" class="tx" style="left:1439.0px;top:1880.2px;font-size:31.0px;font-weight:400;color:#0c0f1c;font-family:'Liberation Sans', sans-serif;letter-spacing:-0.50px;transform:scaleX(0.9815);transform-origin:0 0;-webkit-text-stroke:0.35px currentColor;">SCD_effective_timestamp</div>
<div id="t41" class="tx" style="left:1900.4px;top:1880.2px;font-size:31.0px;font-weight:400;color:#0c0f1c;font-family:'Liberation Sans', sans-serif;letter-spacing:-0.50px;transform:scaleX(0.9390);transform-origin:0 0;-webkit-text-stroke:0.35px currentColor;">TIMESTAMP</div>
<div id="t42" class="tx" style="left:2148.0px;top:1880.2px;font-size:31.0px;font-weight:400;color:#0c0f1c;font-family:'Liberation Sans', sans-serif;letter-spacing:-0.269px;-webkit-text-stroke:0.35px currentColor;">Timestamp when the record becomes effective.</div>
<div id="t43" class="tx" style="left:1439.0px;top:1974.0px;font-size:31.0px;font-weight:400;color:#0c0f1c;font-family:'Liberation Sans', sans-serif;letter-spacing:-0.50px;transform:scaleX(0.9573);transform-origin:0 0;-webkit-text-stroke:0.35px currentColor;">SCD_end_timestamp</div>
<div id="t44" class="tx" style="left:1900.4px;top:1974.0px;font-size:31.0px;font-weight:400;color:#0c0f1c;font-family:'Liberation Sans', sans-serif;letter-spacing:-0.50px;transform:scaleX(0.9390);transform-origin:0 0;-webkit-text-stroke:0.35px currentColor;">TIMESTAMP</div>
<div id="t45" class="tx" style="left:2148.0px;top:1974.0px;font-size:31.0px;font-weight:400;color:#0c0f1c;font-family:'Liberation Sans', sans-serif;letter-spacing:-0.356px;-webkit-text-stroke:0.35px currentColor;">Timestamp when the record is no longer valid</div>
<div style="position:absolute;left:620.0px;top:449.0px;width:2200.0px;height:1253.0px;background:#fff;border-radius:16px;box-shadow:0 22px 56px rgba(0,0,0,0.16),0 4px 12px rgba(0,0,0,0.06);"></div>
<div id="t46" class="tx" style="left:652.0px;top:487.9px;font-size:28.0px;font-weight:700;color:#0d1633;font-family:'Liberation Sans', sans-serif;letter-spacing:0.457px;">Add Managed View</div>
<svg style="position:absolute;left:2764.0px;top:491.0px;" width="24.0" height="24.0" viewBox="0 0 24 24"><path d="M3 3 L21 21 M21 3 L3 21" stroke="#7b8290" stroke-width="2.4" stroke-linecap="round"/></svg>
<div style="position:absolute;left:652.0px;top:555.5px;width:2136.0px;height:3.0px;background:#d2d7de;"></div>
<div id="t47" class="tx" style="left:653.0px;top:592.8px;font-size:25.0px;font-weight:700;color:#25272c;font-family:'Liberation Sans', sans-serif;letter-spacing:-0.50px;transform:scaleX(0.9911);transform-origin:0 0;">Name</div>
<div style="position:absolute;left:652.5px;top:626.0px;width:606.5px;height:71.0px;border:2.5px solid #cdd2d9;border-radius:13px;box-sizing:border-box;"></div>
<div id="t48" class="tx" style="left:679.0px;top:649.6px;font-size:24.0px;font-weight:400;color:#0d1633;font-family:'Liberation Sans', sans-serif;letter-spacing:-0.50px;transform:scaleX(0.9846);transform-origin:0 0;-webkit-text-stroke:0.35px currentColor;">CUSTOMER_PROFILE_WO_GENDER</div>
<div id="t49" class="tx" style="left:653.0px;top:739.8px;font-size:25.0px;font-weight:700;color:#25272c;font-family:'Liberation Sans', sans-serif;letter-spacing:-0.50px;transform:scaleX(1.0035);transform-origin:0 0;">Description</div>
<div style="position:absolute;left:652.5px;top:774.0px;width:606.5px;height:117.0px;border:2.5px solid #cdd2d9;border-radius:13px;box-sizing:border-box;"></div>
<div id="t50" class="tx" style="left:679.0px;top:801.6px;font-size:24.0px;font-weight:400;color:#0d1633;font-family:'Liberation Sans', sans-serif;letter-spacing:-0.089px;-webkit-text-stroke:0.35px currentColor;">Exlcude GENDER from CLIENT_PROFILE</div>
<svg style="position:absolute;left:679.0px;top:826.0px;" width="89.0" height="6.0" viewBox="0 0 89 6"><circle cx="2.0" cy="3" r="1.3" fill="#e5534b"/><circle cx="6.4" cy="3" r="1.3" fill="#e5534b"/><circle cx="10.8" cy="3" r="1.3" fill="#e5534b"/><circle cx="15.2" cy="3" r="1.3" fill="#e5534b"/><circle cx="19.6" cy="3" r="1.3" fill="#e5534b"/><circle cx="24.0" cy="3" r="1.3" fill="#e5534b"/><circle cx="28.4" cy="3" r="1.3" fill="#e5534b"/><circle cx="32.8" cy="3" r="1.3" fill="#e5534b"/><circle cx="37.2" cy="3" r="1.3" fill="#e5534b"/><circle cx="41.6" cy="3" r="1.3" fill="#e5534b"/><circle cx="46.0" cy="3" r="1.3" fill="#e5534b"/><circle cx="50.4" cy="3" r="1.3" fill="#e5534b"/><circle cx="54.8" cy="3" r="1.3" fill="#e5534b"/><circle cx="59.2" cy="3" r="1.3" fill="#e5534b"/><circle cx="63.6" cy="3" r="1.3" fill="#e5534b"/><circle cx="68.0" cy="3" r="1.3" fill="#e5534b"/><circle cx="72.4" cy="3" r="1.3" fill="#e5534b"/><circle cx="76.8" cy="3" r="1.3" fill="#e5534b"/><circle cx="81.2" cy="3" r="1.3" fill="#e5534b"/><circle cx="85.6" cy="3" r="1.3" fill="#e5534b"/></svg>
<div id="t51" class="tx" style="left:652.6px;top:927.6px;font-size:24.0px;font-weight:700;color:#0d1633;font-family:'Liberation Sans', sans-serif;letter-spacing:-0.50px;transform:scaleX(0.9557);transform-origin:0 0;">SQL</div>
<div style="position:absolute;left:652.5px;top:966.5px;width:606.5px;height:458.5px;background:#ece9e9;border:2px solid #cdd1d6;border-radius:15px;box-sizing:border-box;overflow:hidden;"></div>
<div id="t52" class="tx" style="left:678.4px;top:995.2px;font-size:25.0px;font-weight:400;color:#3c3c3c;font-family:'Liberation Mono', monospace;letter-spacing:-0.8px;">1</div>
<div id="t53" class="tx" style="left:678.4px;top:1032.2px;font-size:25.0px;font-weight:400;color:#3c3c3c;font-family:'Liberation Mono', monospace;letter-spacing:-0.8px;">2</div>
<div id="t54" class="tx" style="left:678.4px;top:1069.1px;font-size:25.0px;font-weight:400;color:#3c3c3c;font-family:'Liberation Mono', monospace;letter-spacing:-0.8px;">3</div>
<div id="t55" class="tx" style="left:678.4px;top:1106.0px;font-size:25.0px;font-weight:400;color:#3c3c3c;font-family:'Liberation Mono', monospace;letter-spacing:-0.8px;">4</div>
<div id="t56" class="tx" style="left:678.4px;top:1143.0px;font-size:25.0px;font-weight:400;color:#3c3c3c;font-family:'Liberation Mono', monospace;letter-spacing:-0.8px;">5</div>
<div id="t57" class="tx" style="left:678.4px;top:1180.0px;font-size:25.0px;font-weight:400;color:#3c3c3c;font-family:'Liberation Mono', monospace;letter-spacing:-0.8px;">6</div>
<div id="t58" class="tx" style="left:678.4px;top:1216.9px;font-size:25.0px;font-weight:400;color:#3c3c3c;font-family:'Liberation Mono', monospace;letter-spacing:-0.8px;">7</div>
<div id="t59" class="tx" style="left:678.4px;top:1253.9px;font-size:25.0px;font-weight:400;color:#3c3c3c;font-family:'Liberation Mono', monospace;letter-spacing:-0.8px;">8</div>
<div id="t60" class="tx" style="left:678.4px;top:1290.8px;font-size:25.0px;font-weight:400;color:#3c3c3c;font-family:'Liberation Mono', monospace;letter-spacing:-0.8px;">9</div>
<div id="t61" class="tx" style="left:664.2px;top:1327.8px;font-size:25.0px;font-weight:400;color:#3c3c3c;font-family:'Liberation Mono', monospace;letter-spacing:-0.8px;">10</div>
<div id="t62" class="tx" style="left:664.2px;top:1364.7px;font-size:25.0px;font-weight:400;color:#3c3c3c;font-family:'Liberation Mono', monospace;letter-spacing:-0.8px;">11</div>
<div id="t63" class="tx" style="left:664.2px;top:1401.7px;font-size:25.0px;font-weight:400;color:#3c3c3c;font-family:'Liberation Mono', monospace;letter-spacing:-0.8px;">12</div>
<div id="t64" class="tx" style="left:715.0px;top:995.2px;font-size:25.0px;font-weight:400;color:#8b1a4c;font-family:'Liberation Mono', monospace;letter-spacing:-0.8px;">SELECT</div>
<div id="t65" class="tx" style="left:744.2px;top:1032.2px;font-size:25.0px;font-weight:400;color:#6b9a22;font-family:'Liberation Mono', monospace;letter-spacing:-0.8px;"><span style="color:#6b9a22">&quot;ClientID&quot;</span><span style="color:#999">,</span></div>
<div id="t66" class="tx" style="left:744.2px;top:1069.1px;font-size:25.0px;font-weight:400;color:#6b9a22;font-family:'Liberation Mono', monospace;letter-spacing:-0.8px;"><span style="color:#6b9a22">&quot;BIRTHDATE&quot;</span><span style="color:#999">,</span></div>
<div id="t67" class="tx" style="left:744.2px;top:1106.0px;font-size:25.0px;font-weight:400;color:#6b9a22;font-family:'Liberation Mono', monospace;letter-spacing:-0.8px;"><span style="color:#6b9a22">&quot;FLAG_OWN_CAR&quot;</span><span style="color:#999">,</span></div>
<div id="t68" class="tx" style="left:744.2px;top:1143.0px;font-size:25.0px;font-weight:400;color:#6b9a22;font-family:'Liberation Mono', monospace;letter-spacing:-0.8px;"><span style="color:#6b9a22">&quot;FLAG_OWN_REALTY&quot;</span><span style="color:#999">,</span></div>
<div id="t69" class="tx" style="left:744.2px;top:1180.0px;font-size:25.0px;font-weight:400;color:#6b9a22;font-family:'Liberation Mono', monospace;letter-spacing:-0.8px;"><span style="color:#6b9a22">&quot;CNT_CHILDREN&quot;</span><span style="color:#999">,</span></div>
<div id="t70" class="tx" style="left:744.2px;top:1216.9px;font-size:25.0px;font-weight:400;color:#6b9a22;font-family:'Liberation Mono', monospace;letter-spacing:-0.8px;"><span style="color:#6b9a22">&quot;INCOME_TYPE&quot;</span><span style="color:#999">,</span></div>
<div id="t71" class="tx" style="left:744.2px;top:1253.9px;font-size:25.0px;font-weight:400;color:#6b9a22;font-family:'Liberation Mono', monospace;letter-spacing:-0.8px;"><span style="color:#6b9a22">&quot;EDUCATION_TYPE&quot;</span><span style="color:#999">,</span></div>
<div id="t72" class="tx" style="left:744.2px;top:1290.8px;font-size:25.0px;font-weight:400;color:#6b9a22;font-family:'Liberation Mono', monospace;letter-spacing:-0.8px;"><span style="color:#6b9a22">&quot;FAMILY_STATUS&quot;</span><span style="color:#999">,</span></div>
<div id="t73" class="tx" style="left:744.2px;top:1327.8px;font-size:25.0px;font-weight:400;color:#6b9a22;font-family:'Liberation Mono', monospace;letter-spacing:-0.8px;"><span style="color:#6b9a22">&quot;HOUSING_TYPE&quot;</span><span style="color:#999">,</span></div>
<div id="t74" class="tx" style="left:744.2px;top:1364.7px;font-size:25.0px;font-weight:400;color:#6b9a22;font-family:'Liberation Mono', monospace;letter-spacing:-0.8px;"><span style="color:#6b9a22">&quot;OCCUPATION_TYPE&quot;</span><span style="color:#999">,</span></div>
<div id="t75" class="tx" style="left:744.2px;top:1401.7px;font-size:25.0px;font-weight:400;color:#6b9a22;font-family:'Liberation Mono', monospace;letter-spacing:-0.8px;"><span style="color:#6b9a22">&quot;CNT_FAM_MEMBERS&quot;</span><span style="color:#999">,</span></div>
<div style="position:absolute;left:652.5px;top:1423.0px;width:606.5px;height:17.0px;background:#fff;"></div>
<div style="position:absolute;left:652.5px;top:1405.0px;width:606.5px;height:20.0px;border:2px solid #cdd1d6;border-top:none;border-radius:0 0 15px 15px;box-sizing:border-box;"></div>
<div style="position:absolute;left:652.6px;top:1458.0px;width:83.1px;height:39.0px;background:#e6e8eb;border:2px solid #d9dce1;border-radius:20px;box-sizing:border-box;"></div>
<div style="position:absolute;left:658.5px;top:1465.0px;width:26.0px;height:26.0px;background:#fff;border:2px solid #dcdfe4;border-radius:50%;box-sizing:border-box;"></div>
<div id="t76" class="tx" style="left:761.0px;top:1464.8px;font-size:25.0px;font-weight:400;color:#0d1633;font-family:'Liberation Sans', sans-serif;letter-spacing:-0.018px;-webkit-text-stroke:0.35px currentColor;">Is Global View?</div>
<div style="position:absolute;left:706.8px;top:1530.6px;width:498.2px;height:68.4px;border:2.5px solid #3b7bef;border-radius:35px;box-sizing:border-box;"></div>
<svg style="position:absolute;left:784.0px;top:1548.0px;" width="38.0" height="35.0" viewBox="0 0 38 35"><g fill="none" stroke="#3b7bef" stroke-width="3.2" stroke-linejoin="round"><path d="M5.5 4 H22 L29 11 V27.5 Q29 30 26.5 30 H7.5 Q5.5 30 5.5 27.5 Z"/><path d="M10.5 4 V9.5 H20 V4"/><circle cx="17" cy="20.5" r="3.2"/></g></svg>
<div id="t77" class="tx" style="left:843.5px;top:1550.0px;font-size:30.0px;font-weight:700;color:#3b7bef;font-family:'Liberation Sans', sans-serif;letter-spacing:-0.50px;transform:scaleX(0.9845);transform-origin:0 0;">Save Managed View</div>
<div style="position:absolute;left:1293.0px;top:583.0px;width:2.0px;height:1087.0px;background:#8a8d93;"></div>
<svg style="position:absolute;left:1268.0px;top:623.0px;" width="52.0" height="52.0" viewBox="0 0 52 52"><circle cx="26" cy="26" r="24.5" fill="#fff" stroke="#d5d9df" stroke-width="2"/><g fill="none" stroke="#0d1633" stroke-width="3.6" stroke-linecap="round" stroke-linejoin="round"><path d="M9 26 H21 M14 21 L9 26 L14 31 M31 26 H43 M38 21 L43 26 L38 31"/></g></svg>
<div id="t78" class="tx" style="left:1326.5px;top:586.0px;font-size:25.0px;font-weight:700;color:#0d1633;font-family:'Liberation Sans', sans-serif;letter-spacing:-0.50px;transform:scaleX(0.9998);transform-origin:0 0;">Preview</div>
<div style="position:absolute;left:1326.0px;top:667.5px;width:1462.0px;height:1003.5px;border:2.5px solid #dadde3;box-sizing:border-box;"></div>
<svg style="position:absolute;left:2642.0px;top:697.0px;" width="46.0" height="46.0" viewBox="0 0 46 46"><circle cx="18" cy="18" r="14.5" fill="none" stroke="#7d848f" stroke-width="4"/><path d="M29 29 L40 40" stroke="#7d848f" stroke-width="4.5" stroke-linecap="round"/></svg>
<svg style="position:absolute;left:2716.0px;top:703.0px;" width="40.0" height="32.0" viewBox="0 0 40 32"><rect x="2" y="1.0" width="14" height="4.5" rx="2" fill="#7d848f"/><rect x="2" y="9.5" width="14" height="4.5" rx="2" fill="#7d848f"/><rect x="2" y="18.0" width="14" height="4.5" rx="2" fill="#7d848f"/><rect x="2" y="26.5" width="14" height="4.5" rx="2" fill="#7d848f"/><rect x="22" y="1.0" width="14" height="4.5" rx="2" fill="#7d848f"/><rect x="22" y="9.5" width="14" height="4.5" rx="2" fill="#7d848f"/><rect x="22" y="18.0" width="14" height="4.5" rx="2" fill="#7d848f"/><rect x="22" y="26.5" width="14" height="4.5" rx="2" fill="#7d848f"/></svg>
<div style="position:absolute;left:1487.0px;top:869.0px;width:1299.0px;height:79.7px;background:#f7f8fa;"></div>
<div style="position:absolute;left:1327.0px;top:947.5px;width:1459.0px;height:2.4px;background:#e1e4e8;"></div>
<div style="position:absolute;left:1327.0px;top:1026.8px;width:1459.0px;height:2.4px;background:#e1e4e8;"></div>
<div style="position:absolute;left:1487.0px;top:1028.0px;width:1299.0px;height:79.3px;background:#f7f8fa;"></div>
<div style="position:absolute;left:1327.0px;top:1106.1px;width:1459.0px;height:2.4px;background:#e1e4e8;"></div>
<div style="position:absolute;left:1327.0px;top:1185.4px;width:1459.0px;height:2.4px;background:#e1e4e8;"></div>
<div style="position:absolute;left:1487.0px;top:1186.6px;width:1299.0px;height:79.3px;background:#f7f8fa;"></div>
<div style="position:absolute;left:1327.0px;top:1264.7px;width:1459.0px;height:2.4px;background:#e1e4e8;"></div>
<div style="position:absolute;left:1327.0px;top:1343.5px;width:1459.0px;height:2.4px;background:#e1e4e8;"></div>
<div style="position:absolute;left:1487.0px;top:1344.7px;width:1299.0px;height:79.5px;background:#f7f8fa;"></div>
<div style="position:absolute;left:1327.0px;top:1423.0px;width:1459.0px;height:2.4px;background:#e1e4e8;"></div>
<div style="position:absolute;left:1327.0px;top:1502.0px;width:1459.0px;height:2.4px;background:#e1e4e8;"></div>
<div style="position:absolute;left:1487.0px;top:1503.2px;width:1299.0px;height:86.4px;background:#f7f8fa;"></div>
<div style="position:absolute;left:1327.0px;top:1588.4px;width:1459.0px;height:2.4px;background:#e1e4e8;"></div>
<div style="position:absolute;left:1327.0px;top:1666.8px;width:1459.0px;height:2.4px;background:#e1e4e8;"></div>
<div style="position:absolute;left:1327.0px;top:868.0px;width:1459.0px;height:2.5px;background:#e1e4e8;"></div>
<div style="position:absolute;left:1327.0px;top:869.0px;width:1459.0px;height:11.0px;background:linear-gradient(rgba(0,0,0,0.06),rgba(0,0,0,0));"></div>
<div style="position:absolute;left:1486.0px;top:781.0px;width:2.0px;height:888.0px;background:#dde0e5;"></div>
<div style="position:absolute;left:1786.0px;top:781.0px;width:2.0px;height:888.0px;background:#dde0e5;"></div>
<div style="position:absolute;left:2086.0px;top:781.0px;width:2.0px;height:888.0px;background:#dde0e5;"></div>
<div style="position:absolute;left:2386.0px;top:781.0px;width:2.0px;height:888.0px;background:#dde0e5;"></div>
<div style="position:absolute;left:2686.0px;top:781.0px;width:2.0px;height:888.0px;background:#dde0e5;"></div>
<div style="position:absolute;left:1467.0px;top:781.0px;width:20.0px;height:888.0px;background:linear-gradient(90deg,rgba(0,0,0,0),rgba(0,0,0,0.035));"></div>
<div style="position:absolute;left:1476.5px;top:801.5px;width:7.0px;height:46.5px;background:#cfd3d8;border-radius:4px;"></div>
<div style="position:absolute;left:1776.5px;top:801.5px;width:7.0px;height:46.5px;background:#cfd3d8;border-radius:4px;"></div>
<div style="position:absolute;left:2076.5px;top:801.5px;width:7.0px;height:46.5px;background:#cfd3d8;border-radius:4px;"></div>
<div style="position:absolute;left:2376.5px;top:801.5px;width:7.0px;height:46.5px;background:#cfd3d8;border-radius:4px;"></div>
<div style="position:absolute;left:2676.5px;top:801.5px;width:7.0px;height:46.5px;background:#cfd3d8;border-radius:4px;"></div>
<svg style="position:absolute;left:1352.0px;top:807.0px;" width="28.0" height="24.0" viewBox="0 0 28 24"><g fill="none" stroke="#b9bdc3" stroke-width="2.6" stroke-linecap="round" stroke-linejoin="round"><path d="M7 22 V3 M2 8 L7 3 L12 8"/><path d="M19 2 V21 M14 16 L19 21 L24 16"/></g></svg>
<svg style="position:absolute;left:1511.0px;top:813.6px;" width="42.0" height="22.0" viewBox="0 0 42 22"><g fill="none" stroke="#8e949c" stroke-width="3.4" stroke-linecap="round" stroke-linejoin="round"><path d="M2.5 6 L5.5 3 V19"/><path d="M11 3.5 H18 Q19.5 3.5 19.5 5 V9.5 Q19.5 11 18 11 H12.5 Q11 11 11 12.5 V18.5 H19.5"/><path d="M25 3.5 H33 V18.5 H25 M27 11 H33"/></g></svg>
<div id="t79" class="tx" style="left:1563.0px;top:812.8px;font-size:25.0px;font-weight:700;color:#0a0a0a;font-family:'Liberation Sans', sans-serif;letter-spacing:-0.50px;transform:scaleX(1.0005);transform-origin:0 0;">ClientID</div>
<svg style="position:absolute;left:1660.0px;top:812.0px;" width="28.0" height="24.0" viewBox="0 0 28 24"><g fill="none" stroke="#b9bdc3" stroke-width="2.6" stroke-linecap="round" stroke-linejoin="round"><path d="M7 22 V3 M2 8 L7 3 L12 8"/><path d="M19 2 V21 M14 16 L19 21 L24 16"/></g></svg>
<svg style="position:absolute;left:1811.0px;top:812.6px;" width="35.0" height="18.0" viewBox="0 0 35 18"><g fill="none" stroke="#8e949c" stroke-width="3.2" stroke-linecap="round" stroke-linejoin="round"><path d="M2 16 V6 Q2 2 5.5 2 Q9 2 9 6 V16 M2 10.5 H9"/><path d="M13 2 V16 M13 9.5 Q13 6.5 16.5 6.5 Q20 6.5 20 11 Q20 16 16.5 16 Q13 16 13 13"/><path d="M32 8 Q31 6.5 28.5 6.5 Q24.5 6.5 24.5 11.2 Q24.5 16 28.5 16 Q31 16 32 14.5"/></g></svg>
<div id="t80" class="tx" style="left:1855.0px;top:808.4px;font-size:25.0px;font-weight:700;color:#0a0a0a;font-family:'Liberation Sans', sans-serif;letter-spacing:-0.50px;transform:scaleX(0.9597);transform-origin:0 0;">BIRTHDATE</div>
<svg style="position:absolute;left:1993.0px;top:808.0px;" width="28.0" height="24.0" viewBox="0 0 28 24"><g fill="none" stroke="#b9bdc3" stroke-width="2.6" stroke-linecap="round" stroke-linejoin="round"><path d="M7 22 V3 M2 8 L7 3 L12 8"/><path d="M19 2 V21 M14 16 L19 21 L24 16"/></g></svg>
<svg style="position:absolute;left:2111.0px;top:812.6px;" width="35.0" height="18.0" viewBox="0 0 35 18"><g fill="none" stroke="#8e949c" stroke-width="3.2" stroke-linecap="round" stroke-linejoin="round"><path d="M2 16 V6 Q2 2 5.5 2 Q9 2 9 6 V16 M2 10.5 H9"/><path d="M13 2 V16 M13 9.5 Q13 6.5 16.5 6.5 Q20 6.5 20 11 Q20 16 16.5 16 Q13 16 13 13"/><path d="M32 8 Q31 6.5 28.5 6.5 Q24.5 6.5 24.5 11.2 Q24.5 16 28.5 16 Q31 16 32 14.5"/></g></svg>
<div id="t81" class="tx" style="left:2154.5px;top:808.4px;font-size:25.0px;font-weight:700;color:#0a0a0a;font-family:'Liberation Sans', sans-serif;letter-spacing:-0.50px;transform:scaleX(0.9465);transform-origin:0 0;">FLAG_OWN_CA</div>
<svg style="position:absolute;left:2334.0px;top:808.0px;" width="28.0" height="24.0" viewBox="0 0 28 24"><g fill="none" stroke="#b9bdc3" stroke-width="2.6" stroke-linecap="round" stroke-linejoin="round"><path d="M7 22 V3 M2 8 L7 3 L12 8"/><path d="M19 2 V21 M14 16 L19 21 L24 16"/></g></svg>
<svg style="position:absolute;left:2411.0px;top:812.6px;" width="35.0" height="18.0" viewBox="0 0 35 18"><g fill="none" stroke="#8e949c" stroke-width="3.2" stroke-linecap="round" stroke-linejoin="round"><path d="M2 16 V6 Q2 2 5.5 2 Q9 2 9 6 V16 M2 10.5 H9"/><path d="M13 2 V16 M13 9.5 Q13 6.5 16.5 6.5 Q20 6.5 20 11 Q20 16 16.5 16 Q13 16 13 13"/><path d="M32 8 Q31 6.5 28.5 6.5 Q24.5 6.5 24.5 11.2 Q24.5 16 28.5 16 Q31 16 32 14.5"/></g></svg>
<div id="t82" class="tx" style="left:2455.0px;top:808.4px;font-size:25.0px;font-weight:700;color:#0a0a0a;font-family:'Liberation Sans', sans-serif;letter-spacing:-0.50px;transform:scaleX(0.9428);transform-origin:0 0;">FLAG_OWN_RE</div>
<svg style="position:absolute;left:2634.0px;top:808.0px;" width="28.0" height="24.0" viewBox="0 0 28 24"><g fill="none" stroke="#b9bdc3" stroke-width="2.6" stroke-linecap="round" stroke-linejoin="round"><path d="M7 22 V3 M2 8 L7 3 L12 8"/><path d="M19 2 V21 M14 16 L19 21 L24 16"/></g></svg>
<svg style="position:absolute;left:2711.0px;top:813.6px;" width="42.0" height="22.0" viewBox="0 0 42 22"><g fill="none" stroke="#8e949c" stroke-width="3.4" stroke-linecap="round" stroke-linejoin="round"><path d="M2.5 6 L5.5 3 V19"/><path d="M11 3.5 H18 Q19.5 3.5 19.5 5 V9.5 Q19.5 11 18 11 H12.5 Q11 11 11 12.5 V18.5 H19.5"/><path d="M25 3.5 H33 V18.5 H25 M27 11 H33"/></g></svg>
<div id="t83" class="tx" style="left:2763.0px;top:812.8px;font-size:25.0px;font-weight:700;color:#0a0a0a;font-family:'Liberation Sans', sans-serif;width:23px;overflow:hidden;">CNT_CHILDREN</div>
<div id="t84" class="tx" style="left:1349.0px;top:896.2px;font-size:24.5px;font-weight:400;color:#0d1633;font-family:'Liberation Sans', sans-serif;-webkit-text-stroke:0.35px currentColor;">0</div>
<div id="t85" class="tx" style="left:1508.4px;top:896.2px;font-size:24.5px;font-weight:400;color:#0d1633;font-family:'Liberation Sans', sans-serif;letter-spacing:0.727px;-webkit-text-stroke:0.35px currentColor;">100002</div>
<div id="t86" class="tx" style="left:1808.0px;top:896.2px;font-size:24.5px;font-weight:400;color:#0d1633;font-family:'Liberation Sans', sans-serif;letter-spacing:1.297px;-webkit-text-stroke:0.35px currentColor;">1996-08-20</div>
<div id="t87" class="tx" style="left:2108.0px;top:896.2px;font-size:24.5px;font-weight:400;color:#0d1633;font-family:'Liberation Sans', sans-serif;-webkit-text-stroke:0.35px currentColor;">N</div>
<div id="t88" class="tx" style="left:2408.0px;top:896.2px;font-size:24.5px;font-weight:400;color:#0d1633;font-family:'Liberation Sans', sans-serif;-webkit-text-stroke:0.35px currentColor;">Y</div>
<div id="t89" class="tx" style="left:2708.0px;top:896.2px;font-size:24.5px;font-weight:400;color:#0d1633;font-family:'Liberation Sans', sans-serif;-webkit-text-stroke:0.35px currentColor;">0</div>
<div id="t90" class="tx" style="left:1349.0px;top:975.9px;font-size:24.5px;font-weight:400;color:#0d1633;font-family:'Liberation Sans', sans-serif;-webkit-text-stroke:0.35px currentColor;">1</div>
<div id="t91" class="tx" style="left:1508.4px;top:975.9px;font-size:24.5px;font-weight:400;color:#0d1633;font-family:'Liberation Sans', sans-serif;-webkit-text-stroke:0.35px currentColor;">100003</div>
<div id="t92" class="tx" style="left:1808.0px;top:975.9px;font-size:24.5px;font-weight:400;color:#0d1633;font-family:'Liberation Sans', sans-serif;-webkit-text-stroke:0.35px currentColor;">1977-08-21</div>
<div id="t93" class="tx" style="left:2108.0px;top:975.9px;font-size:24.5px;font-weight:400;color:#0d1633;font-family:'Liberation Sans', sans-serif;-webkit-text-stroke:0.35px currentColor;">N</div>
<div id="t94" class="tx" style="left:2408.0px;top:975.9px;font-size:24.5px;font-weight:400;color:#0d1633;font-family:'Liberation Sans', sans-serif;-webkit-text-stroke:0.35px currentColor;">N</div>
<div id="t95" class="tx" style="left:2708.0px;top:975.9px;font-size:24.5px;font-weight:400;color:#0d1633;font-family:'Liberation Sans', sans-serif;-webkit-text-stroke:0.35px currentColor;">0</div>
<div id="t96" class="tx" style="left:1349.0px;top:1055.2px;font-size:24.5px;font-weight:400;color:#0d1633;font-family:'Liberation Sans', sans-serif;-webkit-text-stroke:0.35px currentColor;">2</div>
<div id="t97" class="tx" style="left:1508.4px;top:1055.2px;font-size:24.5px;font-weight:400;color:#0d1633;font-family:'Liberation Sans', sans-serif;-webkit-text-stroke:0.35px currentColor;">100004</div>
<div id="t98" class="tx" style="left:1808.0px;top:1055.2px;font-size:24.5px;font-weight:400;color:#0d1633;font-family:'Liberation Sans', sans-serif;-webkit-text-stroke:0.35px currentColor;">1970-09-19</div>
<div id="t99" class="tx" style="left:2108.0px;top:1055.2px;font-size:24.5px;font-weight:400;color:#0d1633;font-family:'Liberation Sans', sans-serif;-webkit-text-stroke:0.35px currentColor;">Y</div>
<div id="t100" class="tx" style="left:2408.0px;top:1055.2px;font-size:24.5px;font-weight:400;color:#0d1633;font-family:'Liberation Sans', sans-serif;-webkit-text-stroke:0.35px currentColor;">Y</div>
<div id="t101" class="tx" style="left:2708.0px;top:1055.2px;font-size:24.5px;font-weight:400;color:#0d1633;font-family:'Liberation Sans', sans-serif;-webkit-text-stroke:0.35px currentColor;">0</div>
<div id="t102" class="tx" style="left:1349.0px;top:1134.5px;font-size:24.5px;font-weight:400;color:#0d1633;font-family:'Liberation Sans', sans-serif;-webkit-text-stroke:0.35px currentColor;">3</div>
<div id="t103" class="tx" style="left:1508.4px;top:1134.5px;font-size:24.5px;font-weight:400;color:#0d1633;font-family:'Liberation Sans', sans-serif;-webkit-text-stroke:0.35px currentColor;">100006</div>
<div id="t104" class="tx" style="left:1808.0px;top:1134.5px;font-size:24.5px;font-weight:400;color:#0d1633;font-family:'Liberation Sans', sans-serif;-webkit-text-stroke:0.35px currentColor;">1970-06-26</div>
<div id="t105" class="tx" style="left:2108.0px;top:1134.5px;font-size:24.5px;font-weight:400;color:#0d1633;font-family:'Liberation Sans', sans-serif;-webkit-text-stroke:0.35px currentColor;">N</div>
<div id="t106" class="tx" style="left:2408.0px;top:1134.5px;font-size:24.5px;font-weight:400;color:#0d1633;font-family:'Liberation Sans', sans-serif;-webkit-text-stroke:0.35px currentColor;">Y</div>
<div id="t107" class="tx" style="left:2708.0px;top:1134.5px;font-size:24.5px;font-weight:400;color:#0d1633;font-family:'Liberation Sans', sans-serif;-webkit-text-stroke:0.35px currentColor;">0</div>
<div id="t108" class="tx" style="left:1349.0px;top:1213.8px;font-size:24.5px;font-weight:400;color:#0d1633;font-family:'Liberation Sans', sans-serif;-webkit-text-stroke:0.35px currentColor;">4</div>
<div id="t109" class="tx" style="left:1508.4px;top:1213.8px;font-size:24.5px;font-weight:400;color:#0d1633;font-family:'Liberation Sans', sans-serif;-webkit-text-stroke:0.35px currentColor;">100007</div>
<div id="t110" class="tx" style="left:1808.0px;top:1213.8px;font-size:24.5px;font-weight:400;color:#0d1633;font-family:'Liberation Sans', sans-serif;-webkit-text-stroke:0.35px currentColor;">1967-03-21</div>
<div id="t111" class="tx" style="left:2108.0px;top:1213.8px;font-size:24.5px;font-weight:400;color:#0d1633;font-family:'Liberation Sans', sans-serif;-webkit-text-stroke:0.35px currentColor;">N</div>
<div id="t112" class="tx" style="left:2408.0px;top:1213.8px;font-size:24.5px;font-weight:400;color:#0d1633;font-family:'Liberation Sans', sans-serif;-webkit-text-stroke:0.35px currentColor;">Y</div>
<div id="t113" class="tx" style="left:2708.0px;top:1213.8px;font-size:24.5px;font-weight:400;color:#0d1633;font-family:'Liberation Sans', sans-serif;-webkit-text-stroke:0.35px currentColor;">0</div>
<div id="t114" class="tx" style="left:1349.0px;top:1293.1px;font-size:24.5px;font-weight:400;color:#0d1633;font-family:'Liberation Sans', sans-serif;-webkit-text-stroke:0.35px currentColor;">5</div>
<div id="t115" class="tx" style="left:1508.4px;top:1293.1px;font-size:24.5px;font-weight:400;color:#0d1633;font-family:'Liberation Sans', sans-serif;-webkit-text-stroke:0.35px currentColor;">100008</div>
<div id="t116" class="tx" style="left:1808.0px;top:1293.1px;font-size:24.5px;font-weight:400;color:#0d1633;font-family:'Liberation Sans', sans-serif;-webkit-text-stroke:0.35px currentColor;">1976-09-27</div>
<div id="t117" class="tx" style="left:2108.0px;top:1293.1px;font-size:24.5px;font-weight:400;color:#0d1633;font-family:'Liberation Sans', sans-serif;-webkit-text-stroke:0.35px currentColor;">N</div>
<div id="t118" class="tx" style="left:2408.0px;top:1293.1px;font-size:24.5px;font-weight:400;color:#0d1633;font-family:'Liberation Sans', sans-serif;-webkit-text-stroke:0.35px currentColor;">Y</div>
<div id="t119" class="tx" style="left:2708.0px;top:1293.1px;font-size:24.5px;font-weight:400;color:#0d1633;font-family:'Liberation Sans', sans-serif;-webkit-text-stroke:0.35px currentColor;">0</div>
<div id="t120" class="tx" style="left:1349.0px;top:1371.9px;font-size:24.5px;font-weight:400;color:#0d1633;font-family:'Liberation Sans', sans-serif;-webkit-text-stroke:0.35px currentColor;">6</div>
<div id="t121" class="tx" style="left:1508.4px;top:1371.9px;font-size:24.5px;font-weight:400;color:#0d1633;font-family:'Liberation Sans', sans-serif;-webkit-text-stroke:0.35px currentColor;">100009</div>
<div id="t122" class="tx" style="left:1808.0px;top:1371.9px;font-size:24.5px;font-weight:400;color:#0d1633;font-family:'Liberation Sans', sans-serif;-webkit-text-stroke:0.35px currentColor;">1984-02-25</div>
<div id="t123" class="tx" style="left:2108.0px;top:1371.9px;font-size:24.5px;font-weight:400;color:#0d1633;font-family:'Liberation Sans', sans-serif;-webkit-text-stroke:0.35px currentColor;">Y</div>
<div id="t124" class="tx" style="left:2408.0px;top:1371.9px;font-size:24.5px;font-weight:400;color:#0d1633;font-family:'Liberation Sans', sans-serif;-webkit-text-stroke:0.35px currentColor;">Y</div>
<div id="t125" class="tx" style="left:2708.0px;top:1371.9px;font-size:24.5px;font-weight:400;color:#0d1633;font-family:'Liberation Sans', sans-serif;-webkit-text-stroke:0.35px currentColor;">1</div>
<div id="t126" class="tx" style="left:1349.0px;top:1451.4px;font-size:24.5px;font-weight:400;color:#0d1633;font-family:'Liberation Sans', sans-serif;-webkit-text-stroke:0.35px currentColor;">7</div>
<div id="t127" class="tx" style="left:1508.4px;top:1451.4px;font-size:24.5px;font-weight:400;color:#0d1633;font-family:'Liberation Sans', sans-serif;-webkit-text-stroke:0.35px currentColor;">100010</div>
<div id="t128" class="tx" style="left:1808.0px;top:1451.4px;font-size:24.5px;font-weight:400;color:#0d1633;font-family:'Liberation Sans', sans-serif;-webkit-text-stroke:0.35px currentColor;">1972-12-27</div>
<div id="t129" class="tx" style="left:2108.0px;top:1451.4px;font-size:24.5px;font-weight:400;color:#0d1633;font-family:'Liberation Sans', sans-serif;-webkit-text-stroke:0.35px currentColor;">Y</div>
<div id="t130" class="tx" style="left:2408.0px;top:1451.4px;font-size:24.5px;font-weight:400;color:#0d1633;font-family:'Liberation Sans', sans-serif;-webkit-text-stroke:0.35px currentColor;">Y</div>
<div id="t131" class="tx" style="left:2708.0px;top:1451.4px;font-size:24.5px;font-weight:400;color:#0d1633;font-family:'Liberation Sans', sans-serif;-webkit-text-stroke:0.35px currentColor;">0</div>
<div id="t132" class="tx" style="left:1349.0px;top:1530.4px;font-size:24.5px;font-weight:400;color:#0d1633;font-family:'Liberation Sans', sans-serif;-webkit-text-stroke:0.35px currentColor;">8</div>
<div id="t133" class="tx" style="left:1508.4px;top:1530.4px;font-size:24.5px;font-weight:400;color:#0d1633;font-family:'Liberation Sans', sans-serif;-webkit-text-stroke:0.35px currentColor;">100011</div>
<div id="t134" class="tx" style="left:1808.0px;top:1530.4px;font-size:24.5px;font-weight:400;color:#0d1633;font-family:'Liberation Sans', sans-serif;-webkit-text-stroke:0.35px currentColor;">1969-12-31</div>
<div id="t135" class="tx" style="left:2108.0px;top:1530.4px;font-size:24.5px;font-weight:400;color:#0d1633;font-family:'Liberation Sans', sans-serif;-webkit-text-stroke:0.35px currentColor;">N</div>
<div id="t136" class="tx" style="left:2408.0px;top:1530.4px;font-size:24.5px;font-weight:400;color:#0d1633;font-family:'Liberation Sans', sans-serif;-webkit-text-stroke:0.35px currentColor;">Y</div>
<div id="t137" class="tx" style="left:2708.0px;top:1530.4px;font-size:24.5px;font-weight:400;color:#0d1633;font-family:'Liberation Sans', sans-serif;-webkit-text-stroke:0.35px currentColor;">0</div>
<div id="t138" class="tx" style="left:1349.0px;top:1616.8px;font-size:24.5px;font-weight:400;color:#0d1633;font-family:'Liberation Sans', sans-serif;-webkit-text-stroke:0.35px currentColor;">9</div>
<div id="t139" class="tx" style="left:1508.4px;top:1616.8px;font-size:24.5px;font-weight:400;color:#0d1633;font-family:'Liberation Sans', sans-serif;-webkit-text-stroke:0.35px currentColor;">100012</div>
<div id="t140" class="tx" style="left:1808.0px;top:1616.8px;font-size:24.5px;font-weight:400;color:#0d1633;font-family:'Liberation Sans', sans-serif;-webkit-text-stroke:0.35px currentColor;">1981-12-07</div>
<div id="t141" class="tx" style="left:2108.0px;top:1616.8px;font-size:24.5px;font-weight:400;color:#0d1633;font-family:'Liberation Sans', sans-serif;-webkit-text-stroke:0.35px currentColor;">N</div>
<div id="t142" class="tx" style="left:2408.0px;top:1616.8px;font-size:24.5px;font-weight:400;color:#0d1633;font-family:'Liberation Sans', sans-serif;-webkit-text-stroke:0.35px currentColor;">Y</div>
<div id="t143" class="tx" style="left:2708.0px;top:1616.8px;font-size:24.5px;font-weight:400;color:#0d1633;font-family:'Liberation Sans', sans-serif;-webkit-text-stroke:0.35px currentColor;">0</div>
<div style="position:absolute;left:3328.0px;top:2016.0px;width:100.0px;height:100.0px;background:#3b79f3;border-radius:50%;box-shadow:0 2px 6px rgba(0,0,0,0.25);"></div>
<svg style="position:absolute;left:3328.0px;top:2016.0px;" width="100.0" height="100.0" viewBox="0 0 100 100"><path d="M40.2 42.5 Q40.2 34.2 49.5 34.2 Q58.8 34.2 58.8 42 Q58.8 47 52.8 50.5 Q48.4 53 48.4 57.5 V59.5" fill="none" stroke="#fff" stroke-width="9"/><circle cx="48.4" cy="68" r="5.4" fill="#fff"/></svg>
</body></html>
